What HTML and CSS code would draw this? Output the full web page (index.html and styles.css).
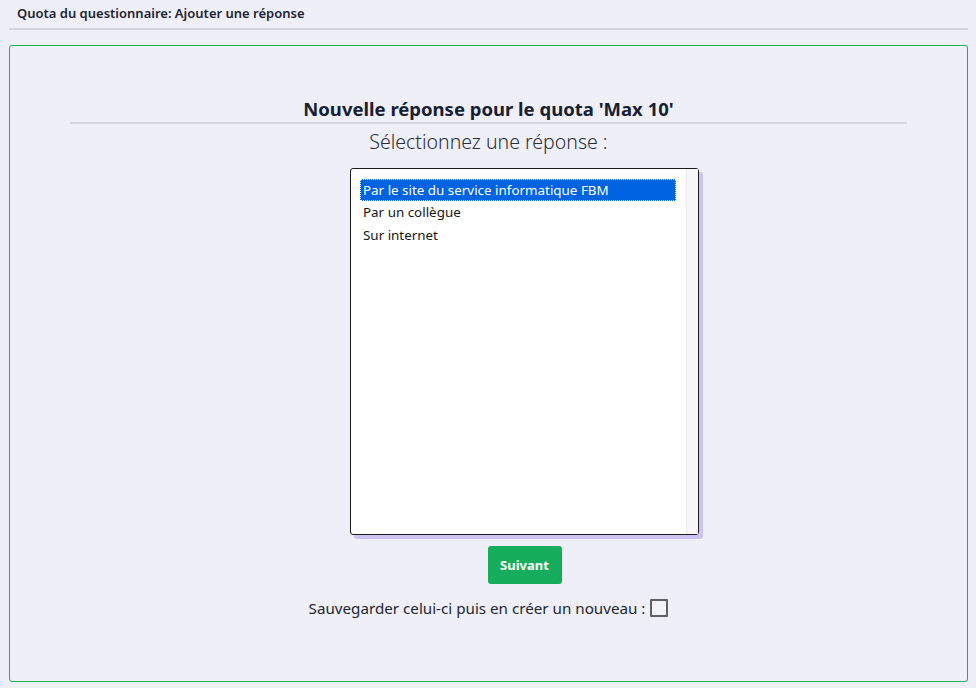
FILE: index.html
```html
<!DOCTYPE html>
<html lang="fr">
<head>
    <meta charset="UTF-8">
    <meta name="viewport" content="width=device-width, initial-scale=1.0">
    <title>Quota du questionnaire</title>
    <link rel="stylesheet" href="styles.css">
</head>
<body>

    <!-- Titre de la page -->
    <div class="page-header">Quota du questionnaire: Ajouter une réponse</div>

    <!-- Formulaire -->
    <div class="panel">
        <h2 class="panel-title">Nouvelle réponse pour le quota 'Max 10'</h2>
        <p class="panel-sub">Sélectionnez une réponse :</p>

        <div class="choice">
            <div class="listbox">
                <div class="list-items">
                    <div class="item selected">Par le site du service informatique FBM</div>
                    <div class="item">Par un collègue</div>
                    <div class="item">Sur internet</div>
                </div>
                <div class="list-scroll"></div>
            </div>
            <button class="btn-next">Suivant</button>
        </div>

        <label class="save-again">Sauvegarder celui-ci puis en créer un nouveau : <span class="box"></span></label>
    </div>

</body>
</html>
```

FILE: styles.css
```css
body {
    font-family: "Noto Sans", "Open Sans", sans-serif;
    margin: 0;
    padding: 0 8px 6px 9px;
    background-color: #eeeff7;
    color: #1f2430;
}

/* En-tête */
.page-header {
    font-size: 13px;
    font-weight: 600;
    padding: 4px 0 0 8px;
    height: 24px;
    border-bottom: 2px solid #d4d4d8;
    margin-bottom: 15px;
}

/* Cadre principal */
.panel {
    border: 1px solid rgb(24, 176, 92);
    border-radius: 3px;
    height: 637px;
    box-sizing: border-box;
    padding-top: 50px;
    text-align: center;
}

.panel-title {
    font-size: 18.5px;
    font-weight: 700;
    color: #172033;
    margin: 0 60px;
    padding-bottom: 1px;
    line-height: 25px;
    border-bottom: 2px solid #d6d7db;
}

.panel-sub {
    font-size: 19.5px;
    font-weight: 300;
    color: #2a2e36;
    margin: 5px 0 0;
    line-height: 26px;
}

/* Liste + bouton */
.choice {
    display: flex;
    flex-direction: column;
    align-items: center;
    padding-left: 72px;
    margin-top: 13px;
}

.listbox {
    width: 349px;
    height: 367px;
    box-sizing: border-box;
    display: flex;
    background: #fff;
    border: 1px solid #1b1b1b;
    border-radius: 3px;
    box-shadow: 4px 4px 0 #cdc4f5;
    text-align: left;
}

.list-items {
    flex: 1;
    padding: 10px 10px 0 9px;
}

.list-scroll {
    width: 11px;
    background: #f7f7f8;
    border-left: 1px solid #ebebee;
}

.item {
    font-size: 13.4px;
    line-height: 23px;
    color: #161616;
    padding-left: 3px;
}

.item.selected {
    background-color: #0063e1;
    color: #fff;
    outline: 1px dotted #fff;
    outline-offset: -1px;
    line-height: 22px;
}

.btn-next {
    margin-top: 11px;
    width: 74px;
    height: 38px;
    background-color: #16ae5c;
    color: #fff;
    border: none;
    border-radius: 3px;
    font-family: inherit;
    font-size: 13px;
    font-weight: 700;
    cursor: pointer;
}

.save-again {
    display: inline-flex;
    align-items: center;
    gap: 5px;
    margin-top: 14px;
    font-size: 15.2px;
    color: #22262e;
}

.box {
    width: 14px;
    height: 14px;
    border: 2px solid #5f6065;
    border-radius: 1px;
    background: #f4f4f8;
}
```
